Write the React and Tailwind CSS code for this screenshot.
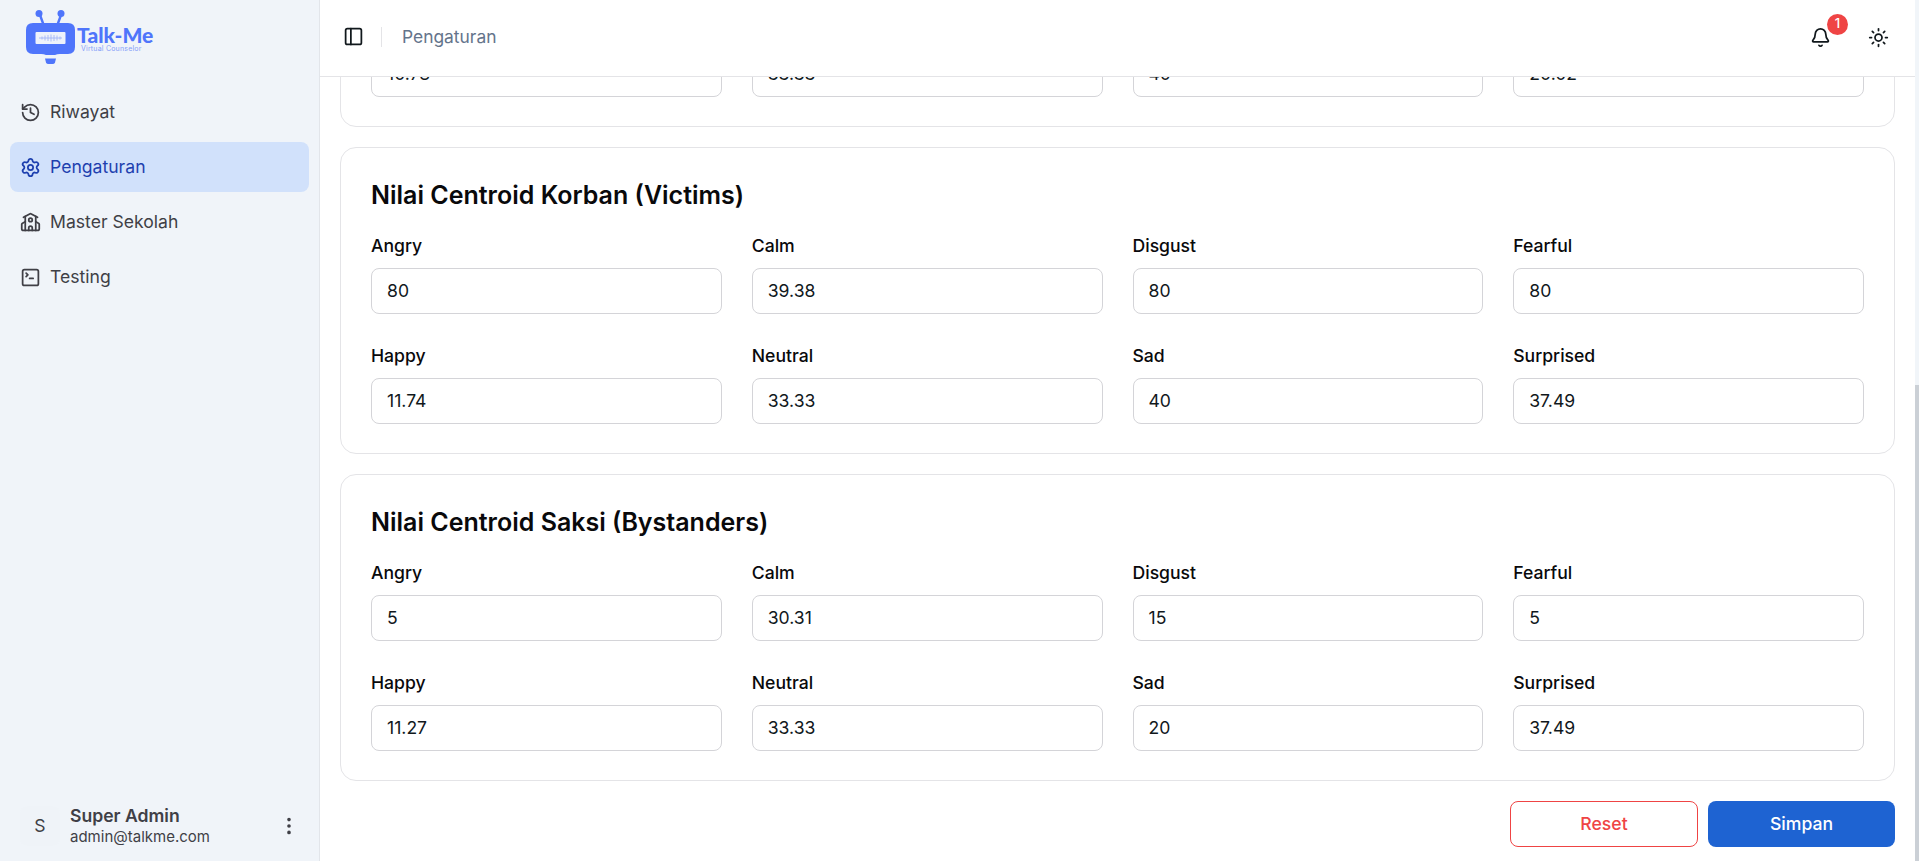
import React from 'react'
import {
  History,
  Settings,
  School,
  SquareTerminal,
  PanelLeft,
  Bell,
  Sun,
  EllipsisVertical,
} from 'lucide-react'

const menu = [
  { label: 'Riwayat', icon: History },
  { label: 'Pengaturan', icon: Settings, active: true },
  { label: 'Master Sekolah', icon: School },
  { label: 'Testing', icon: SquareTerminal },
]

const sections = [
  {
    title: 'Nilai Centroid Pelaku (Bullies)',
    values: ['80', '33.33', '40', '20.02', '10.78', '33.33', '40', '20.02'],
  },
  {
    title: 'Nilai Centroid Korban (Victims)',
    values: ['80', '39.38', '80', '80', '11.74', '33.33', '40', '37.49'],
  },
  {
    title: 'Nilai Centroid Saksi (Bystanders)',
    values: ['5', '30.31', '15', '5', '11.27', '33.33', '20', '37.49'],
  },
]

const labels = ['Angry', 'Calm', 'Disgust', 'Fearful', 'Happy', 'Neutral', 'Sad', 'Surprised']

const Logo = () => (
  <div className="flex items-start pl-[26px] pt-[10px] h-[67px]">
    <svg width="50" height="56" viewBox="0 0 50 56" className="shrink-0">
      <path d="M14 5l4 11M35 5l-4 11" stroke="#4f75fb" strokeWidth="2.4" />
      <circle cx="13" cy="3.5" r="3.5" fill="#4f75fb" />
      <circle cx="35" cy="3.5" r="3.5" fill="#4f75fb" />
      <path
        d="M7 13h35q7 0 7 7v17q0 7-7 7H34q-3 0-5 1H20q-2-1-5-1H7q-7 0-7-7V20q0-7 7-7z"
        fill="#4f75fb"
      />
      <rect x="9.5" y="22" width="30" height="12" rx="1" fill="#eef2fb" />
      <path d="M13 28h23M16 26.5v3M19 25.5v5M22 25v6M25 24.5v7M28 25v6M31 25.5v5M34 26.5v3" stroke="#a3b6f6" strokeWidth="0.9" />
      <path d="M19 48.5h11l-1 4q-.5 1.5-2.5 1.5h-4q-2 0-2.5-1.5z" fill="#4f75fb" />
    </svg>
    <div className="ml-[1px] mt-[15px] flex flex-col items-start">
      <span className="text-[#4f75fb] text-[21px] leading-[20px] font-black font-['Lato',sans-serif]">
        Talk-Me
      </span>
      <span className="text-[#86a0f8] text-[7px] leading-[7px] ml-[4px] tracking-[0.2px]">
        Virtual Counselor
      </span>
    </div>
  </div>
)

const Sidebar = () => (
  <aside className="w-[320px] shrink-0 h-full bg-[#f0f4f9] border-r border-[#e2e5ea] flex flex-col justify-between">
    <div>
      <Logo />
      <nav className="px-[10px] pt-[20px] flex flex-col gap-[5px]">
        {menu.map((m) => (
          <div
            key={m.label}
            className={`h-[50px] flex items-center gap-[9px] pl-[10px] rounded-lg text-[17.6px] ${
              m.active ? 'bg-[#d1e1fb] text-[#1e40af]' : 'text-[#3f3f46]'
            }`}
          >
            <m.icon size={21} strokeWidth={2} />
            <span>{m.label}</span>
          </div>
        ))}
      </nav>
    </div>
    <div className="flex items-center h-[62px] mb-[4px] pl-[20px] pr-[19px]">
      <div className="w-[40px] h-[40px] rounded-lg bg-[#eff3f8] flex items-center justify-center text-[17.6px] text-[#3f3f46] shrink-0">
        S
      </div>
      <div className="ml-[10px] flex-1">
        <p className="text-[17.6px] leading-[22px] font-semibold text-[#3f3f46]">Super Admin</p>
        <p className="text-[15px] leading-[20px] text-[#3f3f46]">admin@talkme.com</p>
      </div>
      <EllipsisVertical size={22} className="text-[#3f3f46]" />
    </div>
  </aside>
)

const Header = () => (
  <header className="h-[77px] shrink-0 bg-white border-b border-[#e4e4e7] flex items-center justify-between pl-[23px] pr-[26px] pb-[2px]">
    <div className="flex items-center">
      <PanelLeft size={21} className="text-[#11181c]" />
      <div className="w-px h-[20px] bg-[#e4e4e7] ml-[17px] mr-[20px]" />
      <span className="text-[17.4px] text-[#64748b]">Pengaturan</span>
    </div>
    <div className="flex items-center gap-[37px]">
      <div className="relative">
        <Bell size={21} className="text-[#11181c]" />
        <span className="absolute -top-[13px] left-[17px] w-[21px] h-[21px] rounded-full bg-[#ef4444] text-white text-[13px] font-medium flex items-center justify-center">
          1
        </span>
      </div>
      <Sun size={21} className="text-[#11181c]" />
    </div>
  </header>
)

const Field = ({ label, value }) => (
  <div>
    <label className="block text-[17.6px] leading-[24px] font-[450] text-[#09090b] mb-[10px]">{label}</label>
    <div className="h-[46px] bg-white border border-[#d4d4d8] rounded-lg flex items-center pl-[15px] text-[17.6px] text-[#11181c]">
      {value}
    </div>
  </div>
)

const Section = ({ title, values }) => (
  <section className="bg-white border border-[#e4e4e7] rounded-2xl px-[30px] pt-[31px] pb-[29px]">
    <h2 className="text-[25px] leading-[33px] font-semibold text-[#09090b] mb-[22px]">{title}</h2>
    <div className="grid grid-cols-4 gap-x-[30px] gap-y-[30px]">
      {labels.map((l, i) => (
        <Field key={l} label={l} value={values[i]} />
      ))}
    </div>
  </section>
)

export default function App() {
  return (
    <div className="w-full h-[861px] overflow-hidden flex bg-white font-['Inter',sans-serif]">
      <Sidebar />
      <div className="flex-1 min-w-0 flex">
        <div className="flex-1 min-w-0 flex flex-col">
          <Header />
          {/* scrolled to the bottom, so the first card is clipped at the top */}
          <main className="flex-1 min-h-0 overflow-hidden flex flex-col justify-end pl-[20px] pr-[20px] pb-[14px]">
            <div className="flex flex-col gap-[20px] shrink-0">
              {sections.map((s) => (
                <Section key={s.title} title={s.title} values={s.values} />
              ))}
              <div className="flex justify-end gap-[10px]">
                <button className="w-[188px] h-[46px] border border-[#ef4444] rounded-lg text-[#ef4444] text-[17.6px] font-[450] bg-white">
                  Reset
                </button>
                <button className="w-[187px] h-[46px] rounded-lg bg-[#1e63d2] text-white text-[17.6px] font-medium">
                  Simpan
                </button>
              </div>
            </div>
          </main>
        </div>
        <div className="w-[4px] shrink-0 bg-[#f1f5f9] flex flex-col justify-end">
          <div className="h-[476px] bg-[#cbd0d6]" />
        </div>
      </div>
    </div>
  )
}
